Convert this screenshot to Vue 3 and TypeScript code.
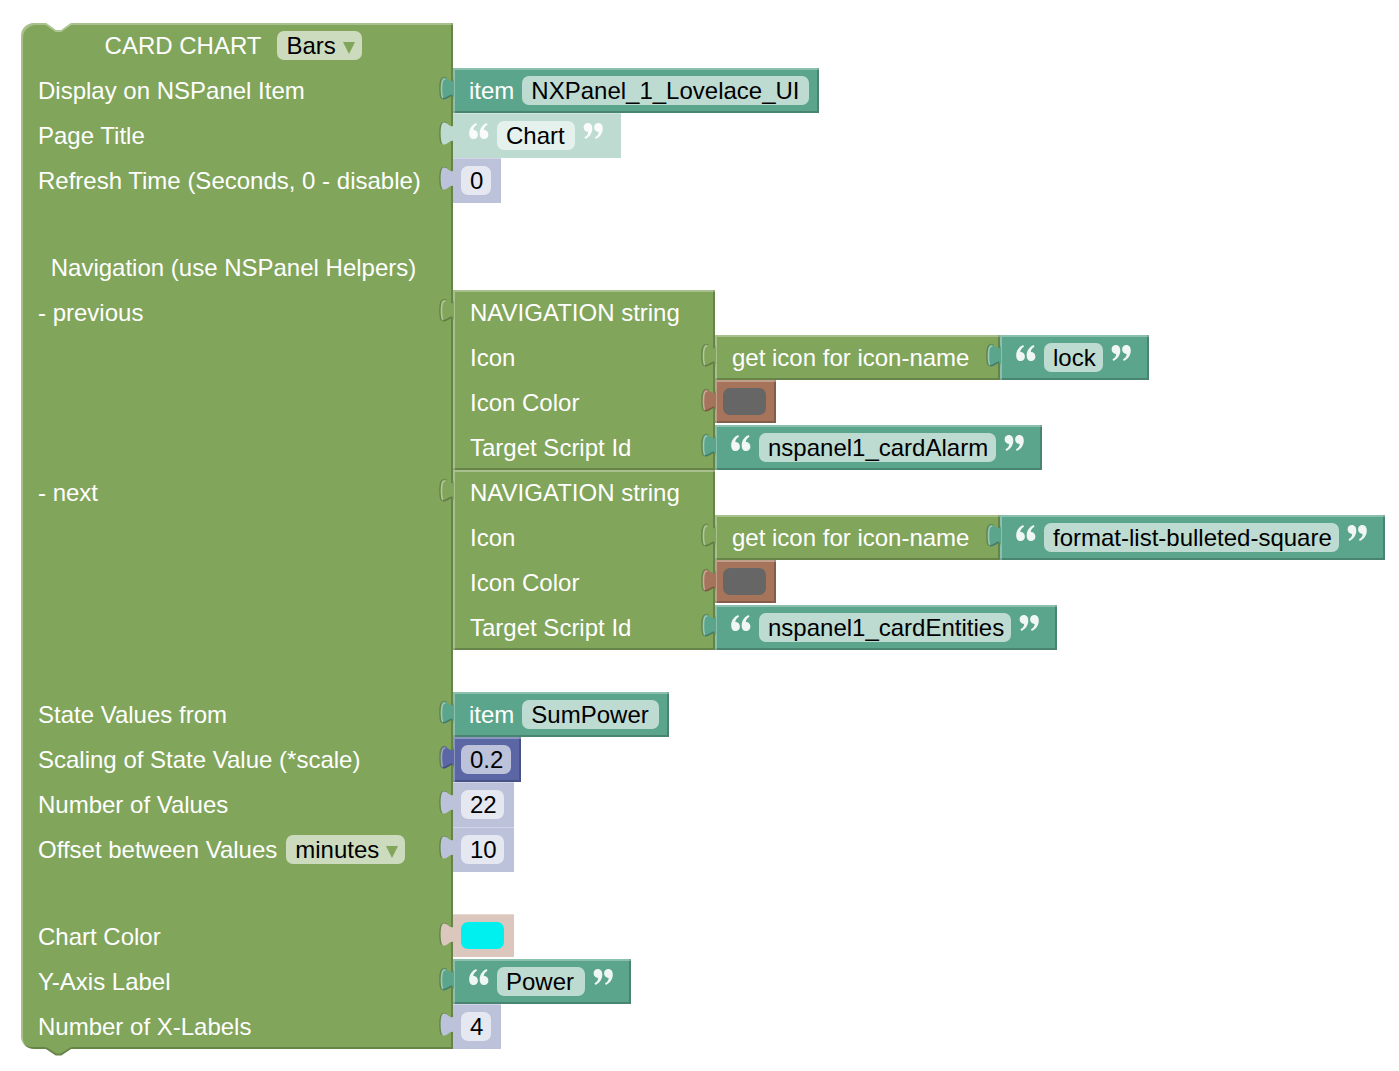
<script setup lang="ts">
import { h, ref, type FunctionalComponent } from 'vue'

const chartType = ref('Bars')
const offsetUnit = ref('minutes')
const chartColor = ref('#00f0f0')

interface Navigation {
  key: string
  label: string
  icon: string
  iconWidth: number
  color: string
  script: string
  scriptWidth: number
}

const navigation = ref<Navigation[]>([
  { key: 'previous', label: '- previous', icon: 'lock', iconWidth: 59, color: '#666666', script: 'nspanel1_cardAlarm', scriptWidth: 237 },
  { key: 'next', label: '- next', icon: 'format-list-bulleted-square', iconWidth: 295, color: '#666666', script: 'nspanel1_cardEntities', scriptWidth: 252 },
])

/* Puzzle tab that plugs a value block into its parent's socket */
const Tab: FunctionalComponent<{ flat?: boolean }> = (props) =>
  h('svg', { class: 'tab', viewBox: '0 0 9 15', 'aria-hidden': 'true' }, [
    h('path', {
      d: 'M4.500 1.300C1.800.2.6 2 .6 7.500c0 3 .3 5 1 6',
      fill: 'none',
      stroke: '#67844a',
      'stroke-width': 1,
    }),
    h('path', { d: 'M9 0c0 10-8-8-8 7.5s8-2.5 8 7.5z', fill: 'currentColor' }),
    props.flat
      ? null
      : h('g', { fill: 'none', 'stroke-width': 0.9 }, [
          h('path', { d: 'M3.800 1.800C2.200 1.500 1.500 3.500 1.500 7.500c0 3 .2 4.500.7 5.500', stroke: '#fff', 'stroke-opacity': 0.4 }),
          h('path', { d: 'M2.300 13.500C4 14.100 5.500 12.200 7.900 11.400', stroke: '#000', 'stroke-opacity': 0.25 }),
        ]),
  ])
Tab.props = { flat: Boolean }

const MARK = 'M.6 4.300C.6 1.700 2.400 0 4.800 0 7.800 0 9.300 2.300 9.300 5.600c0 5-3 8.900-7 10.400l-.8-1.800c2.200-1.200 3.500-2.800 3.700-5.300C2.600 9 .6 7.200.6 4.300z'
const Quote: FunctionalComponent<{ open?: boolean }> = (props) =>
  h('svg', { class: 'quote', viewBox: '0 0 20 25', 'aria-hidden': 'true' }, [
    h('g', { fill: '#fff', 'fill-opacity': 0.9, transform: props.open ? 'rotate(180 10 8)' : undefined }, [
      h('path', { d: MARK }),
      h('path', { d: MARK, transform: 'translate(10.500 0)' }),
    ]),
  ])
Quote.props = { open: Boolean }
</script>

<template>
  <main class="workspace">
    <form class="block root green" @submit.prevent>
      <svg class="notch top" viewBox="0 0 27 9" aria-hidden="true">
        <path d="M0 0h27L17 7h-6L1 0z" fill="#fff" />
        <path d="M0 1h1l10 7h5l10-7h1" fill="none" stroke="#b0c795" stroke-width="2" />
        <path d="M2 0h23l-9 7h-5z" fill="#fff" />
      </svg>
      <svg class="notch bottom" viewBox="0 0 27 9" aria-hidden="true">
        <path d="M0 0h27L16 8h-5z" fill="#81a55b" />
        <path d="M1 1l10 6.500h5L26 1" fill="none" stroke="#67844a" stroke-width="2" />
      </svg>

      <div class="row">
        <div class="head center wide">
          <label for="type">CARD CHART</label>
          <span class="drop">
            <select id="type" v-model="chartType" class="field" style="width: 85px">
              <option>Bars</option>
            </select>
            <svg class="arrow" viewBox="0 0 12 12" aria-hidden="true"><path d="M0 0h12L6 12z" /></svg>
          </span>
        </div>
      </div>

      <div class="row">
        <label class="head" for="item">Display on NSPanel Item</label>
        <div class="value teal item">
          <Tab /><span>item</span>
          <input id="item" class="field" value="NXPanel_1_Lovelace_UI" style="width: 287px" />
        </div>
      </div>

      <div class="row">
        <label class="head" for="title">Page Title</label>
        <div class="value teal string flat">
          <Tab flat /><Quote open />
          <input id="title" class="field" value="Chart" style="width: 78px" />
          <Quote />
        </div>
      </div>

      <div class="row">
        <label class="head" for="refresh">Refresh Time (Seconds, 0 - disable)</label>
        <div class="value math flat">
          <Tab flat /><input id="refresh" class="field" value="0" style="width: 30px" />
        </div>
      </div>

      <div class="spacer"></div>

      <div class="row">
        <div class="head center">Navigation (use NSPanel Helpers)</div>
      </div>

      <div v-for="nav in navigation" :key="nav.key" class="row">
        <div class="head">{{ nav.label }}</div>
        <div class="block nav green">
          <Tab />
          <div class="row"><div class="head">NAVIGATION string</div></div>
          <div class="row">
            <div class="head">Icon</div>
            <div class="block lookup green">
              <Tab />
              <div class="row">
                <label class="head" :for="nav.key + '-icon'">get icon for icon-name</label>
                <div class="value teal string">
                  <Tab /><Quote open />
                  <input :id="nav.key + '-icon'" v-model="nav.icon" class="field" :style="{ width: nav.iconWidth + 'px' }" />
                  <Quote />
                </div>
              </div>
            </div>
          </div>
          <div class="row">
            <label class="head" :for="nav.key + '-color'">Icon Color</label>
            <div class="value clay">
              <Tab /><input :id="nav.key + '-color'" v-model="nav.color" class="swatch" type="color" />
            </div>
          </div>
          <div class="row">
            <label class="head" :for="nav.key + '-script'">Target Script Id</label>
            <div class="value teal string">
              <Tab /><Quote open />
              <input :id="nav.key + '-script'" v-model="nav.script" class="field" :style="{ width: nav.scriptWidth + 'px' }" />
              <Quote />
            </div>
          </div>
        </div>
      </div>

      <div class="spacer"></div>

      <div class="row">
        <label class="head" for="state">State Values from</label>
        <div class="value teal item">
          <Tab /><span>item</span>
          <input id="state" class="field" value="SumPower" style="width: 137px" />
        </div>
      </div>
      <div class="row">
        <label class="head" for="scale">Scaling of State Value (*scale)</label>
        <div class="value math">
          <Tab /><input id="scale" class="field" value="0.2" style="width: 50px" />
        </div>
      </div>
      <div class="row">
        <label class="head" for="count">Number of Values</label>
        <div class="value math flat">
          <Tab flat /><input id="count" class="field" value="22" style="width: 43px" />
        </div>
      </div>
      <div class="row">
        <div class="head">
          <label for="offset">Offset between Values</label>
          <span class="drop">
            <select v-model="offsetUnit" class="field" aria-label="Offset unit" style="width: 119px">
              <option>minutes</option>
            </select>
            <svg class="arrow" viewBox="0 0 12 12" aria-hidden="true"><path d="M0 0h12L6 12z" /></svg>
          </span>
        </div>
        <div class="value math flat">
          <Tab flat /><input id="offset" class="field" value="10" style="width: 43px" />
        </div>
      </div>

      <div class="spacer"></div>

      <div class="row">
        <label class="head" for="color">Chart Color</label>
        <div class="value clay flat">
          <Tab flat /><input id="color" v-model="chartColor" class="swatch" type="color" />
        </div>
      </div>
      <div class="row">
        <label class="head" for="axis">Y-Axis Label</label>
        <div class="value teal string">
          <Tab /><Quote open />
          <input id="axis" class="field" value="Power" style="width: 88px" />
          <Quote />
        </div>
      </div>
      <div class="row">
        <label class="head" for="labels">Number of X-Labels</label>
        <div class="value math flat">
          <Tab flat /><input id="labels" class="field" value="4" style="width: 30px" />
        </div>
      </div>
    </form>
  </main>
</template>

<style>
body {
  margin: 0;
  background: #fff;
}
</style>

<style scoped>
.workspace {
  padding: 23px 0 16px 21px;
  font: 24px/28px "Liberation Sans", Arial, sans-serif;
  color: #fff;
}

.block,
.value {
  position: relative;
  box-sizing: border-box;
  background: var(--fill);
  box-shadow: inset 2px 2px 0 rgba(255, 255, 255, 0.3), inset -2px -2px 0 rgba(0, 0, 0, 0.2);
}
.root { width: 432px; border-radius: 13px 0 0 13px; }
.nav { flex: none; width: 262px; }
.lookup { flex: none; width: 285px; }

.green { --fill: #81a55b; }
.teal { --fill: #5ba58c; }
.math { --fill: #5b67a5; }
.clay { --fill: #a5745b; }
.teal.flat { --fill: #bddbd1; }
.math.flat { --fill: #bdc2db; }
.clay.flat { --fill: #dbc7bd; }
.flat { box-shadow: inset 0 1px 0 rgba(255, 255, 255, 0.3); }

.row {
  display: flex;
  align-items: flex-start;
}
.spacer { height: 42px; }

.head {
  flex: 0 0 100%;
  display: flex;
  align-items: center;
  gap: 9px;
  box-sizing: border-box;
  height: 45px;
  padding: 0 24px 0 17px;
  white-space: nowrap;
}
.center { justify-content: center; }
.wide { gap: 16px; }

.value {
  flex: none;
  display: flex;
  align-items: center;
  height: 45px;
  padding: 0 10px 0 8px;
}
.item { padding-left: 16px; gap: 8px; }
.string { padding: 0 18px 0 16px; gap: 8px; }
.clay { height: 43px; }

.field {
  box-sizing: border-box;
  height: 29px;
  margin: 0;
  padding: 0 0 0 9px;
  border: 0;
  border-radius: 7px;
  outline: 0;
  background: rgba(255, 255, 255, 0.6);
  font: inherit;
  color: #000;
  appearance: none;
}
.drop {
  position: relative;
  display: flex;
}
.arrow {
  position: absolute;
  top: 11px;
  right: 7px;
  width: 12px;
  height: 12px;
  fill: #81a55b;
  pointer-events: none;
}
.swatch {
  width: 43px;
  height: 27px;
  padding: 0;
  border: 0;
  border-radius: 7px;
  overflow: hidden;
  appearance: none;
  background: none;
}
.swatch::-webkit-color-swatch-wrapper { padding: 0; }
.swatch::-webkit-color-swatch { border: 0; }

.tab {
  position: absolute;
  top: 8px;
  left: -14px;
  width: 15px;
  height: 25px;
  color: var(--fill);
  overflow: visible;
}
.quote {
  flex: none;
  width: 20px;
  height: 25px;
}
.notch {
  position: absolute;
  left: 24px;
  width: 27px;
  height: 9px;
}
.top { top: 0; }
.bottom { bottom: -7px; }
</style>
